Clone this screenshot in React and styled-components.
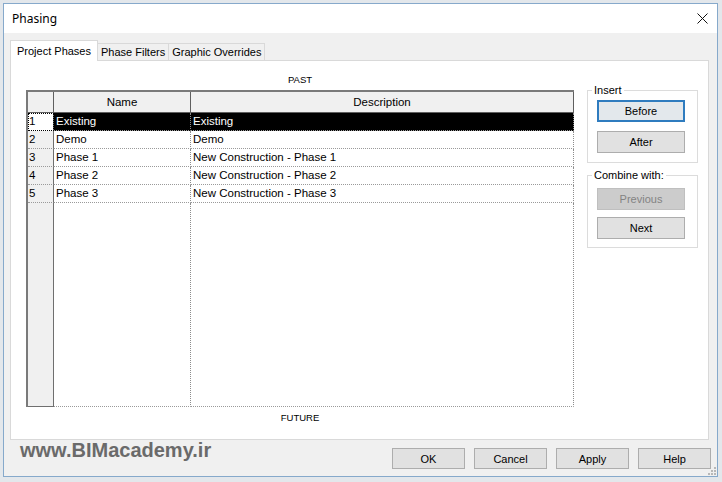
import React from 'react';
import styled, { createGlobalStyle } from 'styled-components';

const GlobalStyle = createGlobalStyle`
  html, body { margin: 0; padding: 0; }
  body {
    background: #e3e7eb;
    width: 722px;
    height: 482px;
    overflow: hidden;
    font-family: "Liberation Sans", Arial, sans-serif;
  }
  * { box-sizing: border-box; }
`;

const Window = styled.div`
  position: relative;
  margin: 3px 0 0 3px;
  width: 715px;
  height: 474px;
  border: 1px solid #86a9cb;
  background: #f0f0f0;
  display: flex;
  flex-direction: column;
`;

const TitleBar = styled.div`
  flex: none;
  height: 29px;
  background: #fff;
  display: flex;
  align-items: center;
  padding-left: 8px;
`;

const Title = styled.div`
  flex: 1;
  font: 12px "Noto Sans", sans-serif;
  color: #000;
`;

const CloseButton = styled.div`
  width: 30px;
  height: 29px;
  display: flex;
  align-items: center;
  justify-content: center;
`;

const Body = styled.div`
  flex: 1;
  display: flex;
  flex-direction: column;
  padding: 7px 8px 0 6px;
`;

const TabStrip = styled.div`
  flex: none;
  height: 20px;
  display: flex;
  align-items: flex-end;
`;

const Tab = styled.div`
  position: relative;
  z-index: ${p => (p.$active ? 1 : 0)};
  height: ${p => (p.$active ? '21px' : '17px')};
  margin-bottom: ${p => (p.$active ? '-1px' : '0')};
  margin-left: ${p => (p.$first ? '0' : '-1px')};
  padding: 0 ${p => (p.$active ? '6px' : '3px')};
  background: ${p => (p.$active ? '#fff' : '#f0f0f0')};
  border: 1px solid #d9d9d9;
  border-bottom: none;
  display: flex;
  align-items: center;
  font-size: 11px;
  color: #000;
  white-space: nowrap;
`;

const Panel = styled.div`
  flex: none;
  height: 380px;
  background: #fff;
  border: 1px solid #d9d9d9;
  display: flex;
  gap: 13px;
  padding: 9px 10px 0 15px;
`;

const LeftColumn = styled.div`
  width: 548px;
  display: flex;
  flex-direction: column;
`;

const Caption = styled.div`
  text-align: center;
  font-size: 9.5px;
  line-height: ${p => p.$h}px;
  color: #000;
`;

const GridTable = styled.div`
  height: 317px;
  display: flex;
  flex-direction: column;
  border-top: 2px solid #7a7a7a;
  border-left: 2px solid #7a7a7a;
  font-size: 11.5px;
  color: #000;
`;

const Row = styled.div`
  display: flex;
  flex: ${p => (p.$fill ? 1 : 'none')};
  height: ${p => (p.$fill ? 'auto' : p.$header ? '21px' : '18px')};
`;

const HeadCell = styled.div`
  width: ${p => (p.$w ? `${p.$w}px` : 'auto')};
  flex: ${p => (p.$w ? 'none' : 1)};
  background: #f0f0f0;
  border-right: 1px solid #5f5f5f;
  border-bottom: 1px solid #5f5f5f;
  display: flex;
  align-items: center;
  justify-content: center;
  line-height: 20px;
`;

const NumCell = styled.div`
  flex: none;
  width: 26px;
  padding-left: 1px;
  line-height: 17px;
  background: ${p => (p.$focus ? '#fff' : '#f0f0f0')};
  border-right: 1px solid #6f6f6f;
  border-bottom: ${p => (p.$end ? '1px solid #6f6f6f' : '1px dotted #9a9a9a')};
  outline: ${p => (p.$focus ? '1px dotted #000' : 'none')};
  outline-offset: -1px;
`;

const NameCell = styled.div`
  flex: none;
  width: 137px;
  padding-left: 2px;
  line-height: 17px;
  white-space: nowrap;
  background: ${p => (p.$selected ? '#000' : '#fff')};
  color: ${p => (p.$selected ? '#fff' : '#000')};
  border-right: 1px dotted #8c8c8c;
  border-bottom: 1px dotted #9a9a9a;
`;

const DescCell = styled(NameCell)`
  flex: 1;
  width: auto;
`;

const RightColumn = styled.div`
  width: 111px;
  padding-top: 13px;
  display: flex;
  flex-direction: column;
`;

const Group = styled.fieldset`
  margin: ${p => p.$mt}px 0 0 0;
  padding: ${p => p.$pt}px 0 ${p => p.$pb}px 9px;
  border: 1px solid #dcdcdc;
  min-width: 0;
  display: flex;
  flex-direction: column;
  gap: ${p => p.$gap}px;
`;

const Legend = styled.legend`
  margin-left: -5px;
  padding: 0 2px;
  font-size: 11px;
  line-height: 14px;
  color: #000;
`;

const DlgButton = styled.div`
  flex: none;
  width: ${p => p.$w}px;
  height: ${p => p.$h}px;
  display: flex;
  align-items: center;
  justify-content: center;
  font-size: 11px;
  color: ${p => (p.$disabled ? '#838383' : '#000')};
  background: ${p => (p.$disabled ? '#cccccc' : p.$default ? '#e3e8ec' : '#e1e1e1')};
  border: ${p =>
    p.$default ? '2px solid #2f7cbf' : p.$disabled ? '1px solid #bfbfbf' : '1px solid #adadad'};
`;

const BottomBar = styled.div`
  flex: 1;
  display: flex;
  align-items: flex-start;
  padding: 8px 0 0 10px;
`;

const Watermark = styled.div`
  margin-top: -9px;
  font: bold 20px "Liberation Sans", Arial, sans-serif;
  line-height: 22px;
  color: #6a6a6a;
`;

const ButtonRow = styled.div`
  margin-left: auto;
  margin-right: -2px;
  display: flex;
  gap: 9px;
`;

const Grip = styled.svg`
  position: absolute;
  right: 1px;
  bottom: 1px;
`;

const rows = [
  { n: 1, name: 'Existing', desc: 'Existing' },
  { n: 2, name: 'Demo', desc: 'Demo' },
  { n: 3, name: 'Phase 1', desc: 'New Construction - Phase 1' },
  { n: 4, name: 'Phase 2', desc: 'New Construction - Phase 2' },
  { n: 5, name: 'Phase 3', desc: 'New Construction - Phase 3' },
];

export default function App() {
  return (
    <>
      <GlobalStyle />
      <Window>
        <TitleBar>
          <Title>Phasing</Title>
          <CloseButton>
            <svg width="11" height="11" viewBox="0 0 11 11">
              <path d="M0.5 0.5 L10.5 10.5 M10.5 0.5 L0.5 10.5" stroke="#111" strokeWidth="1" fill="none" />
            </svg>
          </CloseButton>
        </TitleBar>
        <Body>
          <TabStrip>
            <Tab $active $first>Project Phases</Tab>
            <Tab>Phase Filters</Tab>
            <Tab>Graphic Overrides</Tab>
          </TabStrip>
          <Panel>
            <LeftColumn>
              <Caption $h={20}>PAST</Caption>
              <GridTable>
                <Row $header>
                  <HeadCell $w={26} />
                  <HeadCell $w={137}>Name</HeadCell>
                  <HeadCell>Description</HeadCell>
                </Row>
                {rows.map((r, i) => (
                  <Row key={r.n}>
                    <NumCell $focus={i === 0}>{r.n}</NumCell>
                    <NameCell $selected={i === 0}>{r.name}</NameCell>
                    <DescCell $selected={i === 0}>{r.desc}</DescCell>
                  </Row>
                ))}
                <Row $fill>
                  <NumCell $end />
                  <NameCell />
                  <DescCell />
                </Row>
              </GridTable>
              <Caption $h={22}>FUTURE</Caption>
            </LeftColumn>
            <RightColumn>
              <Group $mt={0} $pt={3} $pb={9} $gap={9}>
                <Legend>Insert</Legend>
                <DlgButton $w={88} $h={22} $default>Before</DlgButton>
                <DlgButton $w={88} $h={22}>After</DlgButton>
              </Group>
              <Group $mt={5} $pt={6} $pb={8} $gap={7}>
                <Legend>Combine with:</Legend>
                <DlgButton $w={88} $h={22} $disabled>Previous</DlgButton>
                <DlgButton $w={88} $h={22}>Next</DlgButton>
              </Group>
            </RightColumn>
          </Panel>
          <BottomBar>
            <Watermark>www.BIMacademy.ir</Watermark>
            <ButtonRow>
              <DlgButton $w={73} $h={21}>OK</DlgButton>
              <DlgButton $w={73} $h={21}>Cancel</DlgButton>
              <DlgButton $w={73} $h={21}>Apply</DlgButton>
              <DlgButton $w={73} $h={21}>Help</DlgButton>
            </ButtonRow>
          </BottomBar>
        </Body>
        <Grip width="10" height="10" viewBox="0 0 10 10">
          {[[8, 2], [8, 5], [5, 5], [8, 8], [5, 8], [2, 8]].map(([x, y]) => (
            <rect key={`${x}-${y}`} x={x} y={y} width="2" height="2" fill="#b8b8b8" />
          ))}
        </Grip>
      </Window>
    </>
  );
}
